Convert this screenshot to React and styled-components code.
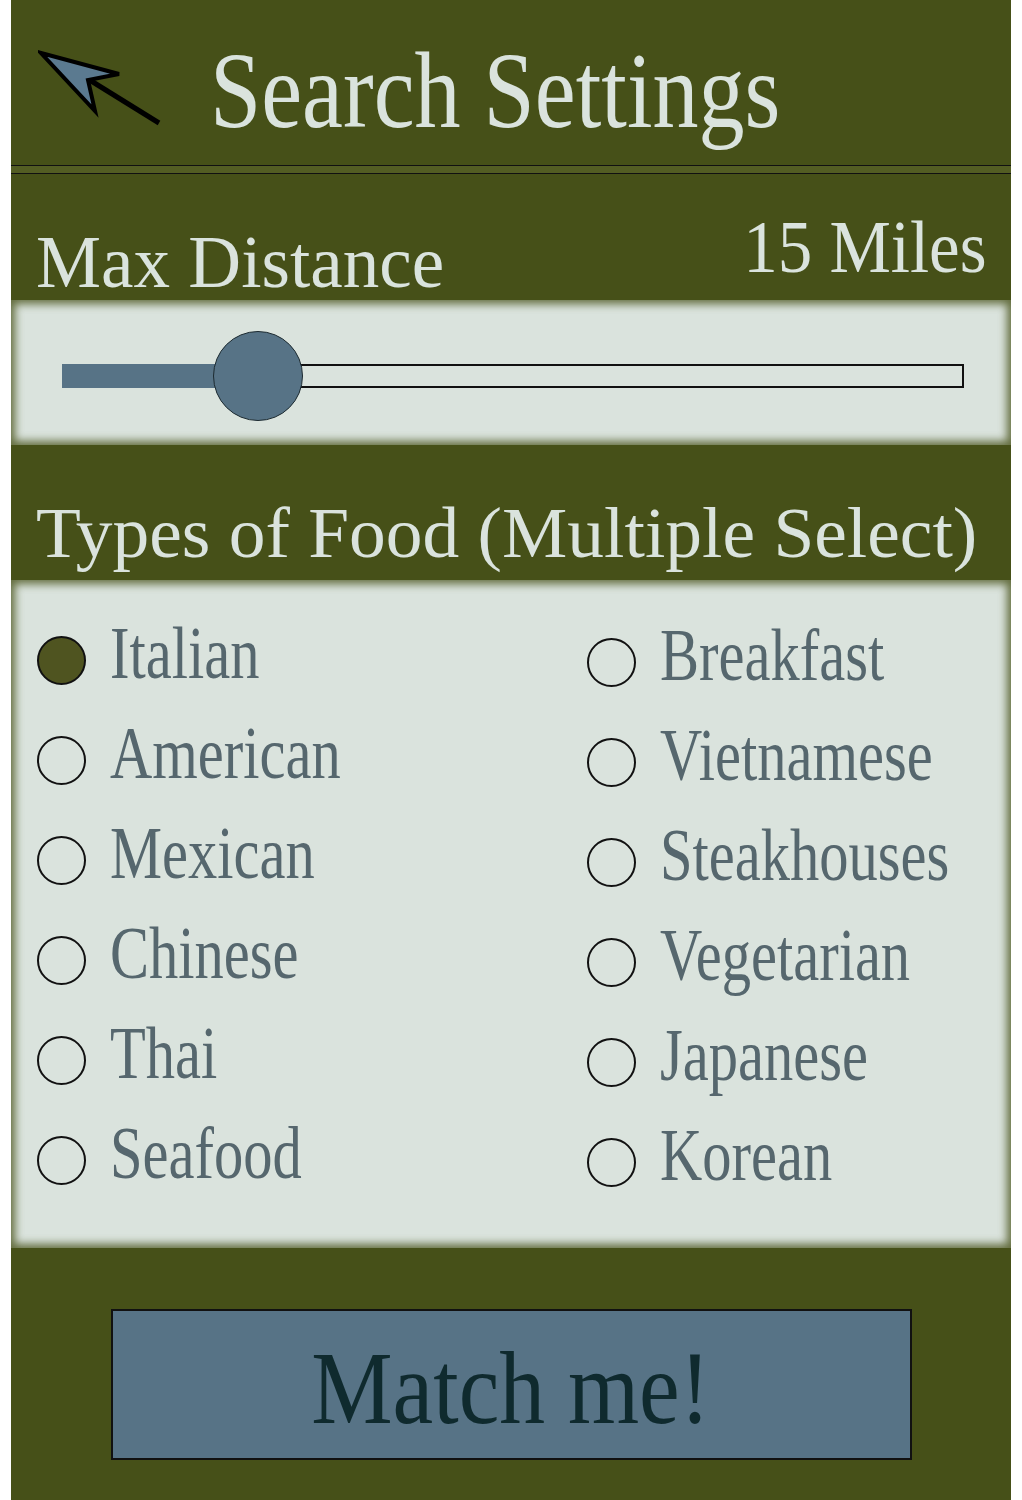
import React from 'react'
import styled, { createGlobalStyle } from 'styled-components'

const GlobalStyle = createGlobalStyle`
  html, body {
    margin: 0;
    padding: 0;
    background: #ffffff;
  }
  * {
    box-sizing: border-box;
  }
`

const Page = styled.main`
  width: 1000px;
  min-height: 1500px;
  margin: 0 11px;
  background: #465018;
  font-family: 'Liberation Serif', 'Times New Roman', serif;
  overflow: hidden;
`

const Header = styled.header`
  height: 165px;
  display: flex;
  align-items: flex-start;
  padding-left: 27px;
`

const BackButton = styled.button`
  margin-top: 50px;
  width: 124px;
  height: 76px;
  padding: 0;
  border: 0;
  background: none;
  cursor: pointer;
  svg {
    display: block;
  }
`

const Squeeze = styled.span`
  display: inline-block;
  white-space: nowrap;
  transform: scaleX(${p => p.$x || 1});
  transform-origin: ${p => p.$origin || 'left'} center;
`

const Title = styled.h1`
  margin: 36px 0 0 48px;
  font-size: 109px;
  line-height: 109px;
  font-weight: normal;
  color: #dae3dd;
`

const Divider = styled.hr`
  margin: 0;
  height: 9px;
  border: 0;
  border-top: 1.5px solid #111;
  border-bottom: 1.5px solid #111;
  background: #535d23;
`

const LabelRow = styled.div`
  height: 126px;
  display: flex;
  justify-content: space-between;
  padding: 0 24px 0 25px;
`

const Label = styled.h2`
  margin: ${p => p.$top}px 0 0;
  font-size: ${p => p.$size}px;
  line-height: ${p => p.$size}px;
  font-weight: normal;
  color: #dae3dd;
`

const Panel = styled.section`
  background: #dae3dd;
  box-shadow: inset 0 0 9px 4px rgba(70, 80, 24, 0.8);
`

const SliderPanel = styled(Panel)`
  height: 145px;
  display: flex;
  align-items: center;
  padding: 6px 47px 0 51px;
`

const Track = styled.div`
  position: relative;
  flex: 1;
  height: 24px;
  display: flex;
`

const TrackFill = styled.div`
  background: #577386;
  height: 100%;
`

const TrackRest = styled.div`
  flex: 1;
  height: 100%;
  border: 2px solid #111;
  background: #dae3dd;
`

const Thumb = styled.div`
  position: absolute;
  top: 50%;
  width: 90px;
  height: 90px;
  border-radius: 50%;
  background: #577386;
  border: 1.5px solid #1c2a30;
  transform: translate(-50%, -50%);
`

const SectionHead = styled.div`
  height: 135px;
  padding: 52px 0 0 25px;
`

const FoodPanel = styled(Panel)`
  height: 668px;
  display: grid;
  grid-template-columns: 550px 1fr;
  grid-auto-flow: column;
  grid-template-rows: repeat(6, 100px);
  padding: 30px 0 38px 26px;
`

const Option = styled.label`
  display: flex;
  align-items: flex-start;
  gap: 24px;
  cursor: pointer;
  margin-top: ${p => (p.$right ? 2 : 0)}px;
`

const Radio = styled.span`
  flex: none;
  width: 49px;
  height: 49px;
  margin-top: 26px;
  border-radius: 50%;
  border: 2px solid #111;
  background: ${p => (p.$checked ? '#4f5420' : 'transparent')};
`

const OptionText = styled.span`
  margin-top: -7px;
  font-size: 75px;
  line-height: 100px;
  color: #56676e;
`

const Footer = styled.div`
  display: flex;
  justify-content: center;
  padding-top: 61px;
`

const MatchButton = styled.button`
  width: 801px;
  height: 151px;
  padding: 4px 0 0;
  border: 2px solid #111;
  background: #577386;
  color: #0f2a2e;
  font-family: 'Liberation Serif', 'Times New Roman', serif;
  font-size: 104px;
  line-height: 145px;
  cursor: pointer;
`

const BackArrow = () => (
  <svg width="124" height="76" viewBox="0 0 124 76">
    <line x1="50" y1="29" x2="121" y2="73" stroke="#000" strokeWidth="5" />
    <path
      d="M3 3 L81 24 L50 30 L57 61 Z"
      fill="#5b7a90"
      stroke="#000"
      strokeWidth="4"
      strokeLinejoin="miter"
    />
  </svg>
)

const foods = [
  'Italian',
  'American',
  'Mexican',
  'Chinese',
  'Thai',
  'Seafood',
  'Breakfast',
  'Vietnamese',
  'Steakhouses',
  'Vegetarian',
  'Japanese',
  'Korean',
]

export default function App() {
  const distance = 15
  const pct = (distance / 69) * 100

  return (
    <>
      <GlobalStyle />
      <Page>
        <Header>
          <BackButton aria-label="Back">
            <BackArrow />
          </BackButton>
          <Title>
            <Squeeze $x={0.845}>Search Settings</Squeeze>
          </Title>
        </Header>
        <Divider />

        <LabelRow>
          <Label $top={50} $size={75}>
            <Squeeze $x={0.975}>Max Distance</Squeeze>
          </Label>
          <Label $top={35} $size={75}>
            <Squeeze $x={0.92} $origin="right">
              {distance} Miles
            </Squeeze>
          </Label>
        </LabelRow>
        <SliderPanel>
          <Track>
            <TrackFill style={{ width: `${pct}%` }} />
            <TrackRest />
            <Thumb style={{ left: `${pct}%` }} />
          </Track>
        </SliderPanel>

        <SectionHead>
          <Label $top={0} $size={72}>
            <Squeeze $x={1.02}>Types of Food (Multiple Select)</Squeeze>
          </Label>
        </SectionHead>
        <FoodPanel>
          {foods.map((food, i) => (
            <Option key={food} $right={i >= 6}>
              <Radio $checked={food === 'Italian'} />
              <OptionText>
                <Squeeze $x={0.78}>{food}</Squeeze>
              </OptionText>
            </Option>
          ))}
        </FoodPanel>

        <Footer>
          <MatchButton>
            <Squeeze $x={0.88} $origin="center">
              Match me!
            </Squeeze>
          </MatchButton>
        </Footer>
      </Page>
    </>
  )
}
